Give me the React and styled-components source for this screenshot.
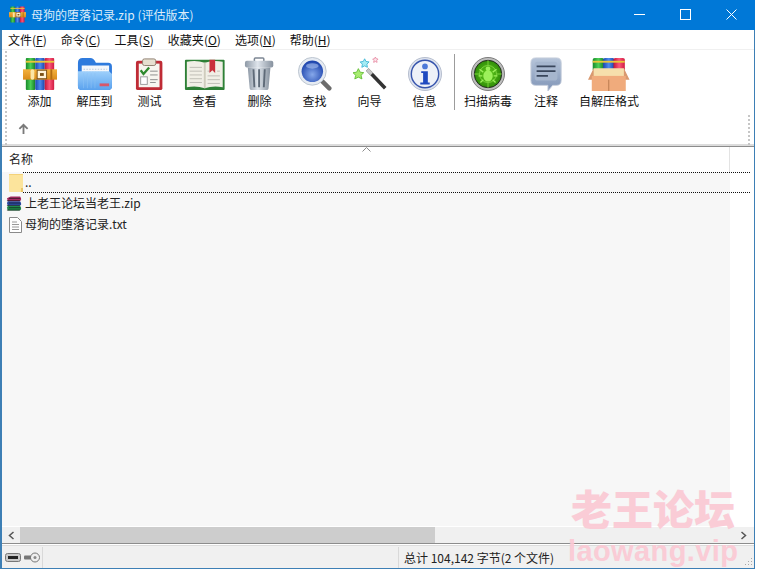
import React from "react";
import styled, { createGlobalStyle } from "styled-components";

const GlobalStyle = createGlobalStyle`
  html, body {
    margin: 0;
    padding: 0;
    background: #fff;
    overflow: hidden;
  }
  body {
    font-family: "Noto Sans CJK SC", "Liberation Sans", sans-serif;
    font-size: 12px;
    color: #111;
  }
`;

const Page = styled.div`
  position: relative;
  width: 757px;
  height: 574px;
  overflow: hidden;
`;
const Win = styled.div`
  width: 755px;
  height: 569px;
  border: 1px solid #3d7fb5;
  border-top: 0;
  border-left-width: 2px;
  box-sizing: border-box;
  display: flex;
  flex-direction: column;
  background: #fff;
`;
const TitleBar = styled.div`
  height: 30px;
  flex: none;
  margin-left: -2px;
  margin-right: -1px;
  background: #0078d7;
  color: #dcecf9;
  display: flex;
  align-items: center;
  padding: 0 1px 2px 9px;
  box-sizing: border-box;
  font-size: 12px;
`;
const TitleText = styled.span`
  margin-left: 5px;
`;
const WinButtons = styled.div`
  margin-left: auto;
  display: flex;
  height: 100%;
`;
const WinBtn = styled.div`
  width: 46px;
  display: flex;
  align-items: center;
  justify-content: center;
`;
const MenuBar = styled.div`
  height: 19px;
  flex: none;
  display: flex;
  align-items: center;
  padding-left: 6px;
  gap: 14px;
  border-bottom: 1px solid #f0f0f0;
`;
const MenuItem = styled.span`
  font-size: 12px;
  u { text-underline-offset: 1px; }
`;
const Toolbar = styled.div`
  height: 97px;
  flex: none;
  position: relative;
  display: flex;
  flex-direction: column;
  border-bottom: 1px solid #8c8c8c;
  box-shadow: inset 0 -2px 0 #dcdcdc;
  box-sizing: border-box;
`;
const Buttons = styled.div`
  display: flex;
  box-sizing: border-box;
  padding: 7px 0 0 10px;
  height: 66px;
`;
const ToolBtn = styled.div`
  width: ${(p) => p.$w || 55}px;
  display: flex;
  flex-direction: column;
  align-items: center;
  svg { display: block; height: 34px; width: auto; }
`;
const ToolLabel = styled.span`
  margin-top: 2px;
  font-size: 12px;
  line-height: 16px;
  white-space: nowrap;
`;
const ToolSep = styled.div`
  width: 1px;
  height: 56px;
  background: #9c9c9c;
  margin: -3px 3px 0 2px;
`;
const Grip = styled.div`
  position: absolute;
  top: ${(p) => p.$top}px;
  ${(p) => (p.$right ? "right: 4px" : "left: 3px")};
  width: 2px;
  height: ${(p) => p.$h}px;
  background: repeating-linear-gradient(#c6c6c6 0 2px, transparent 2px 4px);
`;
const UpRow = styled.div`
  padding: 7px 0 0 16px;
  svg { display: block; }
`;
const ListHead = styled.div`
  height: 25px;
  flex: none;
  position: relative;
  display: flex;
`;
const NameCol = styled.div`
  flex: 1;
  padding-left: 7px;
  line-height: 24px;
  font-size: 12px;
  color: #222;
  border-right: 1px solid #e3e3e3;
`;
const HeadGap = styled.div`
  width: 24px;
`;
const SortMark = styled.svg`
  position: absolute;
  left: 360px;
  top: 0;
`;
const ListArea = styled.div`
  flex: 1;
  display: flex;
  min-height: 0;
`;
const Rows = styled.div`
  flex: 1;
  background: #f7f7f7;
`;
const ScrollGap = styled.div`
  width: 24px;
  background: #fff;
`;
const Row = styled.div`
  height: 21px;
  display: flex;
  align-items: center;
  padding-left: ${(p) => p.$pad}px;
  font-size: 12px;
  color: #222;
  white-space: nowrap;
`;
const ParentRow = styled(Row)`
  margin-right: -24px;
  position: relative;
`;
const ParentFocus = styled.div`
  position: absolute;
  left: 21px;
  right: 4px;
  top: 0;
  bottom: 0;
  border-top: 1px dotted #111;
  border-bottom: 1px dotted #111;
  line-height: 18px;
  padding-left: 2px;
`;
const RowName = styled.span`
  margin-left: 3px;
  margin-top: -2px;
`;
const HScroll = styled.div`
  height: 16px;
  flex: none;
  display: flex;
  background: #f0f0f0;
  border-top: 1px solid #fff;
  padding-right: 2px;
`;
const ScrollArrow = styled.div`
  width: 18px;
  display: flex;
  align-items: center;
  justify-content: center;
`;
const ScrollThumb = styled.div`
  width: 415px;
  background: #cdcdcd;
`;
const ScrollTrack = styled.div`
  flex: 1;
`;
const StatusBar = styled.div`
  height: 24px;
  flex: none;
  display: flex;
  background: #f0f0f0;
  border-top: 1px solid #8c8c8c;
  box-shadow: inset 0 1px 0 #fff, inset 0 2px 0 #dcdcdc;
  font-size: 12px;
  position: relative;
`;
const DriveCell = styled.div`
  width: 41px;
  box-sizing: border-box;
  padding-left: 3px;
  display: flex;
  align-items: center;
  gap: 3px;
  border-right: 1px solid #d9d9d9;
  margin: 3px 0 0;
`;
const StatusFill = styled.div`
  width: 355px;
  border-right: 1px solid #d9d9d9;
  margin-top: 3px;
`;
const StatusText = styled.div`
  padding: 3px 0 0 5px;
  line-height: 21px;
  color: #222;
`;
const ResizeGrip = styled.svg`
  position: absolute;
  right: 1px;
  bottom: 1px;
`;
const Watermark = styled.div`
  position: absolute;
  left: 568px;
  top: 483px;
  width: 170px;
  color: #fbc9d4;
  font-weight: 900;
  pointer-events: none;
  text-align: center;
  opacity: 0.92;
`;
const MarkCn = styled.div`
  font-size: 41px;
  line-height: 49px;
  font-family: "Noto Sans CJK SC", sans-serif;
`;
const MarkEn = styled.div`
  font-family: "Liberation Sans", sans-serif;
  font-size: 29px;
  line-height: 30px;
  margin-top: 4px;
  letter-spacing: 0.4px;
  white-space: nowrap;
`;

const Bands = () => (
  <defs>
    <linearGradient id="green" x1="0" x2="1" y1="0" y2="0">
      <stop offset="0" stopColor="#178a2a" />
      <stop offset=".5" stopColor="#4ccf56" />
      <stop offset="1" stopColor="#167f28" />
    </linearGradient>
    <linearGradient id="blue" x1="0" x2="1" y1="0" y2="0">
      <stop offset="0" stopColor="#1c47b0" />
      <stop offset=".5" stopColor="#4d8bee" />
      <stop offset="1" stopColor="#1c44a8" />
    </linearGradient>
    <linearGradient id="red" x1="0" x2="1" y1="0" y2="0">
      <stop offset="0" stopColor="#c41539" />
      <stop offset=".5" stopColor="#fb5679" />
      <stop offset="1" stopColor="#d01c42" />
    </linearGradient>
    <linearGradient id="gold" x1="0" x2="0" y1="0" y2="1">
      <stop offset="0" stopColor="#f4b23e" />
      <stop offset="1" stopColor="#d98a18" />
    </linearGradient>
    <linearGradient id="sky" x1="0" x2="0" y1="0" y2="1">
      <stop offset="0" stopColor="#9ed0fb" />
      <stop offset="1" stopColor="#5aa2ee" />
    </linearGradient>
    <linearGradient id="metal" x1="0" x2="1" y1="0" y2="0">
      <stop offset="0" stopColor="#8e99a6" />
      <stop offset=".45" stopColor="#dfe5ec" />
      <stop offset="1" stopColor="#86919e" />
    </linearGradient>
    <radialGradient id="lens" cx=".5" cy=".65" r=".6">
      <stop offset="0" stopColor="#86a8ea" />
      <stop offset="1" stopColor="#1f46ae" />
    </radialGradient>
    <radialGradient id="radar" cx=".5" cy=".5" r=".5">
      <stop offset="0" stopColor="#63cf1c" />
      <stop offset="1" stopColor="#2f8c08" />
    </radialGradient>
    <linearGradient id="slate" x1="0" x2="0" y1="0" y2="1">
      <stop offset="0" stopColor="#b7c5da" />
      <stop offset="1" stopColor="#7f94b6" />
    </linearGradient>
  </defs>
);

const RarIcon = ({ size = 36 }) => (
  <svg width={size} height={size} viewBox="0 0 36 36">
    <rect x="3" y="1" width="10" height="34" fill="url(#green)" rx="1" />
    <rect x="13" y="1" width="10" height="34" fill="url(#blue)" rx="1" />
    <rect x="23" y="1" width="10" height="34" fill="url(#red)" rx="1" />
    <rect x="3" y="4" width="30" height="2" fill="#e9c53a" />
    <rect x="0" y="13" width="36" height="11" fill="url(#gold)" />
    <rect x="8" y="13" width="4" height="11" rx="2" fill="#fbe6a6" />
    <rect x="15" y="14" width="10" height="9" fill="#fff4d8" stroke="#7a5014" />
    <rect x="18" y="17" width="4" height="3" fill="#7a5014" />
    <rect x="29" y="13" width="2" height="11" fill="#b26c10" />
  </svg>
);

const FolderIcon = () => (
  <svg width="38" height="36" viewBox="0 0 38 36">
    <path d="M1 6q0-5 5-5h8q4 0 6 5h13q4 0 4 4v21q0 4-4 4H5q-4 0-4-4z" fill="#2f7bdd" />
    <rect x="5" y="9" width="29" height="14" fill="#f4f7fb" />
    <path d="M7 13h25M7 16h25" stroke="#b9c6d8" strokeDasharray="1.5 1.5" />
    <path d="M1 15l33 0 3 3v13q0 4-4 4H5q-4 0-4-4z" fill="url(#sky)" />
    <path d="M7 17v16M11 17v16M15 17v16M19 17v16" stroke="#8cc2f5" strokeWidth=".6" />
    <rect x="24" y="28" width="10" height="3" fill="#d8576a" />
  </svg>
);

const TestIcon = () => (
  <svg width="30" height="36" viewBox="0 0 30 36">
    <rect x="1" y="4" width="28" height="31" rx="2" fill="#bf2b35" />
    <rect x="4" y="7" width="22" height="25" fill="#f7f5ef" />
    <rect x="8" y="2" width="14" height="7" rx="2" fill="#e6dfd0" stroke="#8e7e70" />
    <path d="M6 14l3 4 6-7" stroke="#2f8a2d" strokeWidth="2.4" fill="none" />
    <rect x="6" y="21" width="7" height="8" fill="#fff" stroke="#999" />
    <path d="M16 15h8M16 19h8M16 24h8M16 27h6" stroke="#8a8a8a" />
  </svg>
);

const BookIcon = () => (
  <svg width="44" height="36" viewBox="0 0 44 36">
    <rect x="1" y="3" width="42" height="32" rx="1" fill="#2e8036" />
    <path d="M3 5q10-2 19 1q9-3 19-1v27q-10-2-19 1q-9-3-19-1z" fill="#f1efe6" />
    <path d="M6 11h13M6 15h13M6 19h13M6 23h13M6 27h13M25 20h13M25 24h13M25 28h13M25 15h3M35 15h3" stroke="#bdbcb4" />
    <path d="M27 3h6v14l-3-3-3 3z" fill="#c9303c" />
    <rect x="21" y="6" width="2" height="27" fill="#cfccbd" />
  </svg>
);

const TrashIcon = () => (
  <svg width="32" height="36" viewBox="0 0 32 36">
    <rect x="11" y="1" width="10" height="4" rx="1" fill="none" stroke="#7d8794" strokeWidth="1.6" />
    <rect x="1" y="4" width="30" height="7" rx="2" fill="url(#metal)" />
    <path d="M4 11h24l-2 22q0 2-3 2H9q-3 0-3-2z" fill="url(#metal)" />
    <path d="M10 13l1 19M16 13v19M22 13l-1 19" stroke="#5e6a78" strokeWidth="2" />
  </svg>
);

const SearchIcon = () => (
  <svg width="38" height="38" viewBox="0 0 38 38">
    <path d="M25 25l10 10" stroke="#6c6c6c" strokeWidth="5" strokeLinecap="round" />
    <circle cx="16" cy="16" r="15.500" fill="#e6ebf2" stroke="#b6c0cc" />
    <circle cx="16" cy="16" r="12" fill="url(#lens)" />
    <ellipse cx="16" cy="10" rx="7" ry="3" fill="#a8c0ee" opacity=".6" />
  </svg>
);

const WandIcon = () => (
  <svg width="38" height="38" viewBox="0 0 38 38">
    <path d="M16 14l20 21" stroke="#333" strokeWidth="4" />
    <path d="M16 14l5 5" stroke="#c7c7c7" strokeWidth="4" />
    <path d="M6 13l2 4 4 .5-3 3 1 4-4-2-4 2 1-4-3-3 4-.5z" fill="#a8ec70" stroke="#62bd35" />
    <path d="M13 2l1.500 3 3.500.5-2.500 2.500.6 3.500-3.100-1.600-3.100 1.600.6-3.500L8 5.500l3.500-.5z" fill="#a6ecf4" stroke="#3eb6d4" />
    <path d="M25 0l1 2 2 .3-1.500 1.500.4 2.200-1.900-1-1.900 1 .4-2.200L22 2.300l2-.3z" fill="#fde4ea" stroke="#e88ea6" />
  </svg>
);

const InfoIcon = () => (
  <svg width="36" height="36" viewBox="0 0 36 36">
    <circle cx="18" cy="18" r="17.500" fill="#dde2ee" stroke="#b4bccc" />
    <circle cx="18" cy="18" r="14.500" fill="#eef1f8" stroke="#3553ac" strokeWidth="1.500" />
    <circle cx="18" cy="10" r="3" fill="#4d79d8" />
    <path d="M14 15h7v12h2v2H13v-2h3V17h-2z" fill="#1f49c0" />
  </svg>
);

const VirusIcon = () => (
  <svg width="36" height="36" viewBox="0 0 36 36">
    <circle cx="18" cy="18" r="17.500" fill="#bdbdbd" stroke="#777" />
    <circle cx="18" cy="18" r="14.500" fill="url(#radar)" stroke="#222" />
    <circle cx="18" cy="18" r="9" fill="none" stroke="#7ed63f" />
    <path d="M18 3.500v5M18 27.500v5M3.500 18h5M27.500 18h5" stroke="#7ed63f" />
    <ellipse cx="18" cy="20" rx="5" ry="6" fill="#9cf05a" />
    <circle cx="18" cy="12.500" r="2.500" fill="#9cf05a" />
    <path d="M13 16l-4-3M23 16l4-3M12 20H8M24 20h4M13 24l-3 3M23 24l3 3" stroke="#9cf05a" strokeWidth="1.400" />
  </svg>
);

const NoteIcon = () => (
  <svg width="34" height="36" viewBox="0 0 34 36">
    <path d="M6 1h22q5 0 5 5v19q0 5-5 5h-4l-5 6v-6H6q-5 0-5-5V6q0-5 5-5z" fill="url(#slate)" stroke="#c3ccdb" />
    <rect x="5" y="5" width="24" height="20" rx="3" fill="#a6b6ce" />
    <path d="M7 10h20M7 15h20M7 20h12" stroke="#39465c" strokeWidth="1.800" />
  </svg>
);

const BoxIcon = () => (
  <svg width="44" height="36" viewBox="0 0 44 36">
    <rect x="5" y="1" width="12" height="14" rx="2" fill="url(#green)" />
    <rect x="16" y="1" width="12" height="14" rx="2" fill="url(#blue)" />
    <rect x="27" y="1" width="12" height="14" rx="2" fill="url(#red)" />
    <rect x="5" y="4" width="34" height="2" fill="#e9c53a" />
    <path d="M6 12h32l3 8H3z" fill="#f6dfac" />
    <path d="M6 12L0 24h6zM38 12l6 12h-6z" fill="#d9996f" />
    <rect x="4" y="20" width="36" height="16" fill="#f0ab7c" />
    <path d="M22 24v12" stroke="#b6774d" />
  </svg>
);

const tools = [
  { label: "添加", icon: <RarIcon /> },
  { label: "解压到", icon: <FolderIcon /> },
  { label: "测试", icon: <TestIcon /> },
  { label: "查看", icon: <BookIcon /> },
  { label: "删除", icon: <TrashIcon /> },
  { label: "查找", icon: <SearchIcon /> },
  { label: "向导", icon: <WandIcon /> },
  { label: "信息", icon: <InfoIcon /> },
];

const tools2 = [
  { label: "扫描病毒", icon: <VirusIcon />, w: 60 },
  { label: "注释", icon: <NoteIcon />, w: 56 },
  { label: "自解压格式", icon: <BoxIcon />, w: 70 },
];

const menus = [
  ["文件", "F"],
  ["命令", "C"],
  ["工具", "S"],
  ["收藏夹", "O"],
  ["选项", "N"],
  ["帮助", "H"],
];

const App = () => (
  <Page>
    <GlobalStyle />
    <svg width="0" height="0" style={{ position: "absolute" }}>
      <Bands />
    </svg>
    <Win>
      <TitleBar>
        <RarIcon size={17} />
        <TitleText>母狗的堕落记录.zip (评估版本)</TitleText>
        <WinButtons>
          <WinBtn>
            <svg width="11" height="11" viewBox="0 0 11 11"><path d="M0 5.500h11" stroke="#fff" /></svg>
          </WinBtn>
          <WinBtn>
            <svg width="11" height="11" viewBox="0 0 11 11"><rect x=".5" y=".5" width="10" height="10" fill="none" stroke="#fff" /></svg>
          </WinBtn>
          <WinBtn>
            <svg width="11" height="11" viewBox="0 0 11 11"><path d="M.5.500l10 10M10.500.500l-10 10" stroke="#fff" /></svg>
          </WinBtn>
        </WinButtons>
      </TitleBar>
      <MenuBar>
        {menus.map(([name, key]) => (
          <MenuItem key={key}>
            {name}(<u>{key}</u>)
          </MenuItem>
        ))}
      </MenuBar>
      <Toolbar>
        <Grip $top={1} $h={94} />
        <Grip $top={65} $h={30} $right />
        <Buttons>
          {tools.map((t) => (
            <ToolBtn key={t.label}>
              {t.icon}
              <ToolLabel>{t.label}</ToolLabel>
            </ToolBtn>
          ))}
          <ToolSep />
          {tools2.map((t) => (
            <ToolBtn key={t.label} $w={t.w}>
              {t.icon}
              <ToolLabel>{t.label}</ToolLabel>
            </ToolBtn>
          ))}
        </Buttons>
        <UpRow>
          <svg width="11" height="11" viewBox="0 0 12 12">
            <path d="M6 12V2M1.500 6.500L6 2l4.500 4.500" stroke="#7a7a7a" strokeWidth="2" fill="none" />
          </svg>
        </UpRow>
      </Toolbar>
      <ListHead>
        <SortMark width="9" height="5" viewBox="0 0 9 5">
          <path d="M.5 4.500l4-4 4 4" stroke="#8a8a8a" fill="none" />
        </SortMark>
        <NameCol>名称</NameCol>
        <HeadGap />
      </ListHead>
      <ListArea>
        <Rows>
          <ParentRow $pad={7}>
            <svg width="14" height="18" viewBox="0 0 14 18">
              <rect width="14" height="18" rx="1" fill="#fce49c" />
              <rect width="14" height="1" fill="#f4d27a" />
              <rect x="12" y="14" width="2" height="4" fill="#e8c467" />
            </svg>
            <ParentFocus>..</ParentFocus>
          </ParentRow>
          <Row $pad={4}>
            <svg width="16" height="17" viewBox="0 0 17 17">
              <path d="M1 3l4-2h10l1 2v2l-2 1H2z" fill="#a82a63" />
              <path d="M1 8l1-2h13l1 2v2l-2 1H2z" fill="#2b4aa3" />
              <path d="M1 13l1-2h13l1 2v2l-2 1H2z" fill="#1f8b4a" />
              <path d="M1 5.500h14M1 10.500h14M1 15.500h14M3 3h12M3 8h12M3 13h12" stroke="#111" strokeWidth=".7" />
            </svg>
            <RowName>上老王论坛当老王.zip</RowName>
          </Row>
          <Row $pad={7}>
            <svg width="13" height="16" viewBox="0 0 13 16">
              <path d="M.5.500h8l4 4v11H.5z" fill="#fff" stroke="#8a8a8a" />
              <path d="M3 5h5M3 7.500h7M3 10h7M3 12.500h7" stroke="#9a9a9a" />
            </svg>
            <RowName>母狗的堕落记录.txt</RowName>
          </Row>
        </Rows>
        <ScrollGap />
      </ListArea>
      <HScroll>
        <ScrollArrow>
          <svg width="7" height="9" viewBox="0 0 7 9"><path d="M5.500 1l-4 3.500 4 3.500" stroke="#555" strokeWidth="1.500" fill="none" /></svg>
        </ScrollArrow>
        <ScrollThumb />
        <ScrollTrack />
        <ScrollArrow>
          <svg width="7" height="9" viewBox="0 0 7 9"><path d="M1.500 1l4 3.500-4 3.500" stroke="#555" strokeWidth="1.500" fill="none" /></svg>
        </ScrollArrow>
      </HScroll>
      <StatusBar>
        <DriveCell>
          <svg width="16" height="9" viewBox="0 0 16 9">
            <rect x=".5" y=".5" width="15" height="8" rx="2" fill="#c9c9c9" stroke="#777" />
            <rect x="3" y="3" width="10" height="3" fill="#222" />
          </svg>
          <svg width="16" height="11" viewBox="0 0 16 11">
            <circle cx="11" cy="5.500" r="4.500" fill="#eee" stroke="#777" />
            <circle cx="11" cy="5.500" r="1.500" fill="#888" />
            <rect x="0" y="3.500" width="7" height="4" rx="1" fill="#777" />
          </svg>
        </DriveCell>
        <StatusFill />
        <StatusText>总计 104,142 字节(2 个文件)</StatusText>
        <ResizeGrip width="10" height="10" viewBox="0 0 10 10">
          <path d="M8 1h1v1H8zM5 4h1v1H5zM8 4h1v1H8zM2 7h1v1H2zM5 7h1v1H5zM8 7h1v1H8z" fill="#a8a8a8" />
        </ResizeGrip>
      </StatusBar>
    </Win>
    <Watermark>
      <MarkCn>老王论坛</MarkCn>
      <MarkEn>laowang.vip</MarkEn>
    </Watermark>
  </Page>
);

export default App;
